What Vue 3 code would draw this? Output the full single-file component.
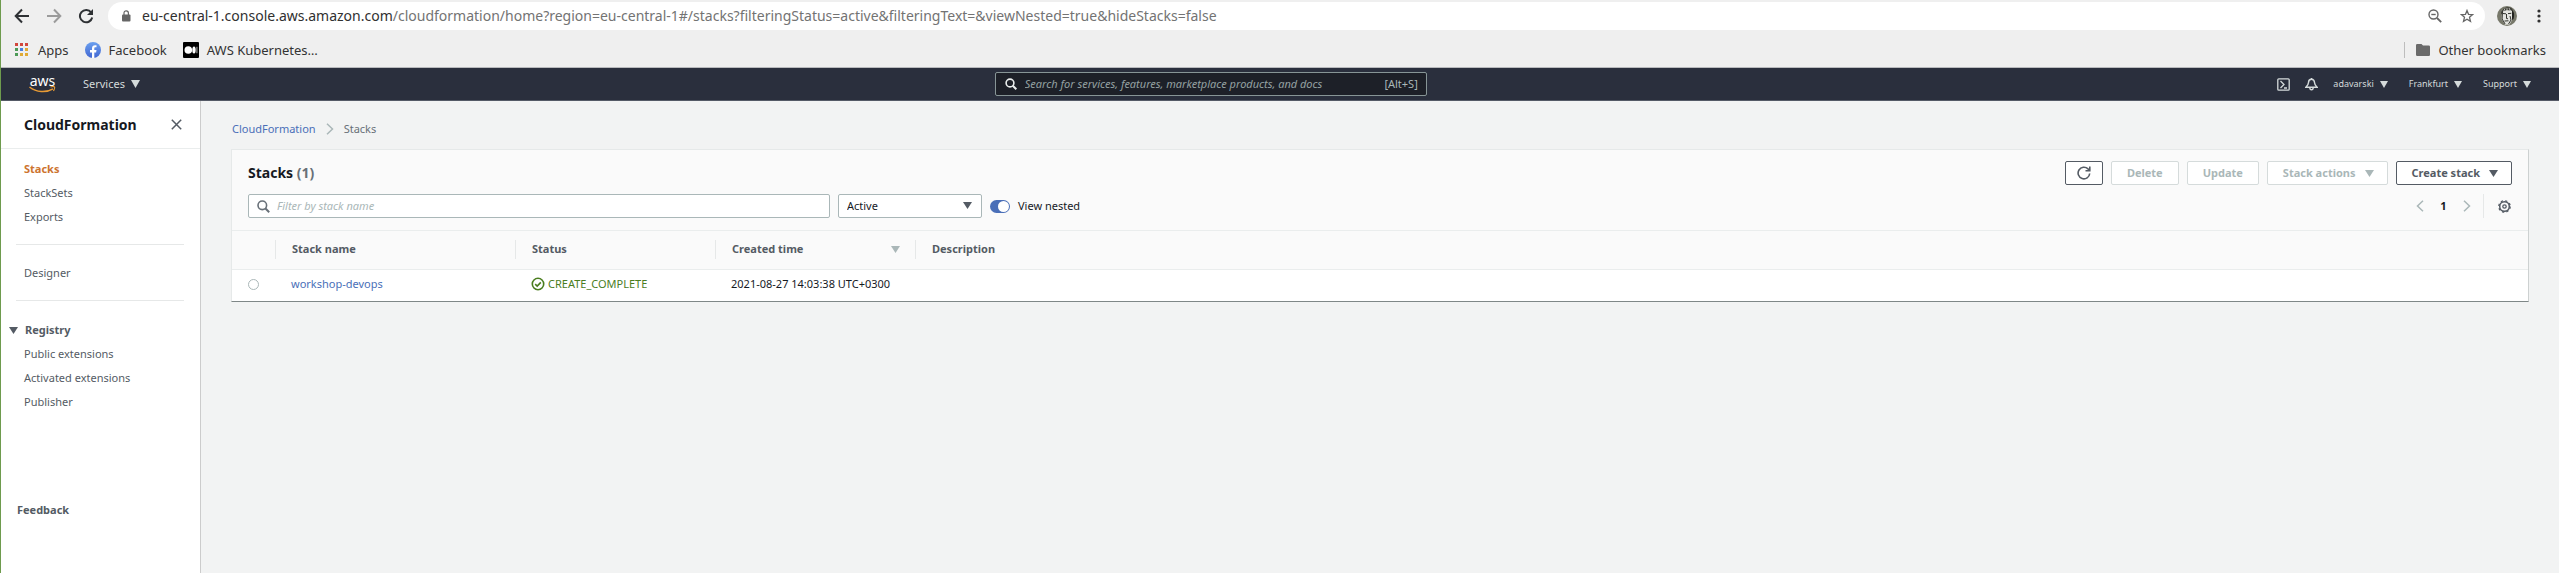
<script setup>
import { ref } from 'vue'

const filterText = ref('')
const status = ref('Active')
const viewNested = ref(true)

const appSquares = ['r', 'r', 'r', 'g', 'b', 'y', 'g', 'y', 'y']
const accountMenus = ['adavarski', 'Frankfurt', 'Support']
const mainLinks = ['Stacks', 'StackSets', 'Exports']
const registryLinks = ['Public extensions', 'Activated extensions', 'Publisher']
const stacks = [
  { name: 'workshop-devops', status: 'CREATE_COMPLETE', created: '2021-08-27 14:03:38 UTC+0300', description: '' },
]
</script>

<template>
  <div class="window">
    <header class="browser">
      <div class="toolbar">
        <button class="nav" aria-label="Back">
          <svg width="16" height="16" viewBox="0 0 16 16" fill="none" stroke="#2e3134" stroke-width="2"><path d="M15 8H2M8 1.500 1.700 8 8 14.500" /></svg>
        </button>
        <button class="nav" aria-label="Forward">
          <svg width="16" height="16" viewBox="0 0 16 16" fill="none" stroke="#9b9b9b" stroke-width="2"><path d="M1 8h13M8 1.500 14.300 8 8 14.500" /></svg>
        </button>
        <button class="nav" aria-label="Reload">
          <svg width="16" height="16" viewBox="0 0 16 16"><path d="M13.200 4.500A6.200 6.200 0 1 0 14.200 9.500" fill="none" stroke="#2e3134" stroke-width="2" /><path d="M15 1v6H9z" fill="#2e3134" /></svg>
        </button>
        <div class="omnibox">
          <svg width="10" height="12" viewBox="0 0 10 12"><rect x="1" y="4.500" width="8.500" height="7" rx="1" fill="#666" /><path d="M3 5V3a2.200 2.200 0 0 1 4.400 0v2" fill="none" stroke="#666" stroke-width="1.200" /></svg>
          <div class="url" role="textbox" aria-label="Address"><span class="host">eu-central-1.console.aws.amazon.com</span>/cloudformation/home?region=eu-central-1#/stacks?filteringStatus=active&amp;filteringText=&amp;viewNested=true&amp;hideStacks=false</div>
          <button class="tool" aria-label="Zoom">
            <svg width="14" height="14" viewBox="0 0 14 14" fill="none" stroke="#666" stroke-width="1.400"><circle cx="5.500" cy="5.500" r="4.500" /><path d="m9 9 4.200 4.200" stroke-width="1.800" /><path d="M3.300 5.500h4.400" /></svg>
          </button>
          <button class="tool" aria-label="Bookmark this page">
            <svg width="14" height="14" viewBox="0 0 14 14" fill="none" stroke="#666" stroke-width="1.300"><path d="m7 1.500 1.500 3.800 4.200.3-3.200 2.700 1 4.100L7 10.200l-3.500 2.200 1-4.100L1.300 5.600l4.200-.3z" /></svg>
          </button>
        </div>
        <button class="avatar" aria-label="Profile">
          <svg width="20" height="20" viewBox="0 0 20 20">
            <circle cx="10" cy="10" r="10" fill="#77786a" />
            <path d="M5 4.500C7 1.500 14 1.500 16 5l-.5 8-3 5.500-4.500.3L4.500 13z" fill="#e4e5e0" />
            <path d="M15 4c2.500 2 2.500 5 1.500 9l-1.500 1z" fill="#22231f" />
            <path d="M4 8.500C3.800 4.500 7 1.500 10.500 1.300s5 1.500 6 4C13 4 9 3.500 6.500 5.500z" fill="#3c3d36" />
            <path d="M8 2.500 6 6.500M12 2l1.500 3M10 2v3" stroke="#dcdcd6" stroke-width=".8" />
            <path d="m6 7.500 3 .3M11 7.600l3.300-.3M9.500 8v4.500l1.500.3M7.500 15l4-.2M13 10l1 4-2.500 4M5.500 6l-.4 7 3 5" fill="none" stroke="#34352f" />
          </svg>
        </button>
        <button class="dots" aria-label="Menu">
          <svg width="4" height="14" viewBox="0 0 4 14" fill="#303030"><circle cx="2" cy="2" r="1.600" /><circle cx="2" cy="7" r="1.600" /><circle cx="2" cy="12" r="1.600" /></svg>
        </button>
      </div>
      <nav class="bookmarks" aria-label="Bookmarks">
        <a href="#" class="bm apps"><span class="squares"><i v-for="(c, i) in appSquares" :key="i" :class="c"></i></span>Apps</a>
        <a href="#" class="bm">
          <svg width="16" height="16" viewBox="0 0 16 16"><defs><linearGradient id="fb" x2="0" y2="1"><stop stop-color="#6ba0ef" /><stop offset="1" stop-color="#4267d2" /></linearGradient></defs><circle cx="8" cy="8" r="8" fill="url(#fb)" /><path d="M7 16v-5.600H5V8h2V6.300C7 4.200 8.200 3.200 10 3.200l1.500.1v2h-1c-.9 0-1.200.5-1.200 1.200V8h2.200l-.4 2.400H9.300V16z" fill="#fff" /></svg>Facebook</a>
        <a href="#" class="bm">
          <svg width="16" height="16" viewBox="0 0 16 16"><rect width="16" height="16" rx="1" fill="#000" /><circle cx="5.300" cy="8" r="3.800" fill="#fff" /><ellipse cx="11" cy="8" rx="1.700" ry="3.600" fill="#fff" /><rect x="13.300" y="4.800" width="1.200" height="6.400" fill="#999" /></svg>AWS Kubernetes…</a>
        <a href="#" class="bm other">
          <svg width="14" height="12" viewBox="0 0 14 12"><path d="M1.200 0H5.500L7 1.500h5.800A1.200 1.200 0 0 1 14 2.700v8.100a1.200 1.200 0 0 1-1.200 1.200H1.200A1.200 1.200 0 0 1 0 10.800V1.200A1.200 1.200 0 0 1 1.200 0z" fill="#6a6a6a" /></svg>Other bookmarks</a>
      </nav>
    </header>

    <header class="aws">
      <div class="aws-left">
        <a href="#" class="logo" aria-label="AWS home">
          <span>aws</span>
          <svg width="27" height="7" viewBox="0 0 27 7" fill="none" stroke="#e79a35" stroke-width="1.500"><path d="M.5 1c7 5.500 16.500 6 23.500 1.800" /><path d="M21.500 1c2-.6 3.500-.6 4 0s0 2-1 4" stroke-width="1.200" /></svg>
        </a>
        <button class="menu services">Services<svg width="9" height="8" viewBox="0 0 9 8"><path d="M0 0h9L4.500 8z" fill="currentColor" /></svg></button>
      </div>
      <label class="search">
        <svg width="12" height="12" viewBox="0 0 12 12" fill="none" stroke="#eaeded" stroke-width="1.600"><circle cx="5" cy="5" r="3.900" /><path d="m7.800 7.800 3.500 3.500" stroke-width="2" /></svg>
        <input type="text" aria-label="Search" placeholder="Search for services, features, marketplace products, and docs" />
        <span>[Alt+S]</span>
      </label>
      <div class="aws-right">
        <button class="icon" aria-label="CloudShell"><svg width="13" height="13" viewBox="0 0 13 13" fill="none" stroke="#d5dbdb" stroke-width="1.300"><rect x=".8" y=".8" width="11.400" height="11.400" rx="1" /><path d="m3.500 3 3.500 3.500L3.500 10M7 10h3" /></svg></button>
        <button class="icon" aria-label="Notifications"><svg width="13" height="13" viewBox="0 0 13 13" fill="none" stroke="#d5dbdb" stroke-width="1.400"><path d="M6.500 1.300c-2 0-3 1.300-3 3.200 0 2-.9 3-2.600 4.700h11.200C10.400 7.500 9.500 6.500 9.500 4.500c0-1.900-1-3.200-3-3.200z" /><path d="M4.800 9.500c0 3 3.400 3 3.400 0M6.500 0v1.500" /></svg></button>
        <button v-for="m in accountMenus" :key="m" class="menu account">{{ m }}<svg width="8" height="7" viewBox="0 0 8 7"><path d="M0 0h8L4 7z" fill="currentColor" /></svg></button>
      </div>
    </header>

    <div class="body">
      <aside class="side">
        <div class="side-head">
          <h1>CloudFormation</h1>
          <button aria-label="Close"><svg width="11" height="11" viewBox="0 0 11 11" stroke="#545b64" stroke-width="1.500"><path d="m.8.8 9.400 9.400M10.200.8.8 10.200" /></svg></button>
        </div>
        <nav class="side-nav">
          <ul>
            <li v-for="l in mainLinks" :key="l"><a href="#" :class="{ active: l === 'Stacks' }">{{ l }}</a></li>
          </ul>
          <hr />
          <ul><li><a href="#">Designer</a></li></ul>
          <hr />
          <button class="section"><svg width="9" height="7" viewBox="0 0 9 7"><path d="M0 0h9L4.500 7z" fill="currentColor" /></svg>Registry</button>
          <ul>
            <li v-for="l in registryLinks" :key="l"><a href="#">{{ l }}</a></li>
          </ul>
        </nav>
        <a href="#" class="feedback">Feedback</a>
      </aside>

      <main class="main">
        <nav class="crumbs" aria-label="Breadcrumb">
          <a href="#">CloudFormation</a>
          <svg width="8" height="12" viewBox="0 0 8 12" fill="none" stroke="#aab7b8" stroke-width="1.500"><path d="m1 .7 5.500 5.300L1 11.300" /></svg>
          <span>Stacks</span>
        </nav>

        <section class="panel">
          <div class="panel-head">
            <div class="row">
              <h2>Stacks <span>(1)</span></h2>
              <div class="actions">
                <button class="btn refresh" aria-label="Refresh"><svg width="14" height="14" viewBox="0 0 14 14" fill="none" stroke="currentColor" stroke-width="1.600"><path d="M12.700 7.500A5.800 5.800 0 1 1 11 2.900l1.700 1.600" /><path d="M12.800.5v4.200H8.500" /></svg></button>
                <button class="btn" disabled>Delete</button>
                <button class="btn" disabled>Update</button>
                <button class="btn drop" disabled>Stack actions<svg width="9" height="7" viewBox="0 0 9 7"><path d="M0 0h9L4.500 7z" fill="currentColor" /></svg></button>
                <button class="btn drop">Create stack<svg width="9" height="7" viewBox="0 0 9 7"><path d="M0 0h9L4.500 7z" fill="currentColor" /></svg></button>
              </div>
            </div>
            <div class="row filters">
              <label class="filter">
                <svg width="13" height="13" viewBox="0 0 13 13" fill="none" stroke="#687078" stroke-width="1.600"><circle cx="5.300" cy="5.300" r="4.300" /><path d="m8.500 8.500 3.700 3.700" stroke-width="2" /></svg>
                <input v-model="filterText" type="text" aria-label="Filter by stack name" placeholder="Filter by stack name" />
              </label>
              <div class="select">
                <select v-model="status" aria-label="Status filter">
                  <option>Active</option>
                  <option>Deleted</option>
                </select>
                <svg width="9" height="7" viewBox="0 0 9 7"><path d="M0 0h9L4.500 7z" fill="#545b64" /></svg>
              </div>
              <label class="toggle"><input v-model="viewNested" type="checkbox" />View nested</label>
              <div class="pager">
                <button aria-label="Previous page"><svg width="8" height="12" viewBox="0 0 8 12" fill="none" stroke="#aab7b8" stroke-width="1.500"><path d="M7 .7 1.500 6 7 11.300" /></svg></button>
                <button class="page" aria-current="page">1</button>
                <button aria-label="Next page"><svg width="8" height="12" viewBox="0 0 8 12" fill="none" stroke="#aab7b8" stroke-width="1.500"><path d="m1 .7 5.500 5.300L1 11.300" /></svg></button>
                <span class="bar"></span>
                <button aria-label="Preferences"><svg width="13" height="13" viewBox="0 0 13 13" fill="none" stroke="#545b64"><circle cx="6.500" cy="6.500" r="4.800" stroke-width="1.500" /><circle cx="6.500" cy="6.500" r="5.700" stroke-width="1.300" stroke-dasharray="2.240 2.240" /><circle cx="6.500" cy="6.500" r="1.700" stroke-width="1.300" /></svg></button>
              </div>
            </div>
          </div>

          <table>
            <colgroup><col class="c-pick" /><col class="c-name" /><col class="c-status" /><col class="c-time" /><col /></colgroup>
            <thead>
              <tr>
                <th aria-label="Selection"></th>
                <th><div>Stack name</div></th>
                <th><div>Status</div></th>
                <th><div>Created time<svg width="9" height="7" viewBox="0 0 9 7"><path d="M0 0h9L4.500 7z" fill="#aab7b8" /></svg></div></th>
                <th><div>Description</div></th>
              </tr>
            </thead>
            <tbody>
              <tr v-for="s in stacks" :key="s.name">
                <td class="pick"><input type="radio" name="stack" :aria-label="s.name" /></td>
                <td><a href="#">{{ s.name }}</a></td>
                <td>
                  <span class="ok"><svg width="14" height="14" viewBox="0 0 14 14" fill="none" stroke="currentColor" stroke-width="1.600"><circle cx="7" cy="7" r="5.700" /><path d="m4.200 7.200 2 1.900 3.600-3.700" /></svg>{{ s.status }}</span>
                </td>
                <td>{{ s.created }}</td>
                <td>{{ s.description }}</td>
              </tr>
            </tbody>
          </table>
        </section>
      </main>
    </div>
  </div>
</template>

<style>
body {
  background: #f2f3f3;
}
</style>

<style scoped>
* {
  box-sizing: border-box;
}
.window {
  display: flex;
  flex-direction: column;
  min-height: 100vh;
  border-left: 1px solid #6e9b4e;
  font: 11px/16px "Noto Sans", "Open Sans", sans-serif;
  color: #16191f;
}
button {
  display: flex;
  align-items: center;
  justify-content: center;
  padding: 0;
  border: 0;
  background: none;
  font: inherit;
  color: inherit;
}
a {
  color: #4a6fb8;
  text-decoration: none;
}
svg {
  display: block;
  flex: none;
}
h1,
h2,
ul {
  margin: 0;
  padding: 0;
  list-style: none;
}
h1,
h2 {
  font-size: 14px;
  line-height: 20px;
}

/* Browser chrome */
.browser {
  background: #efefef;
  border-bottom: 1px solid #b9babd;
  font-size: 13px;
  color: #333;
}
.toolbar {
  display: flex;
  align-items: center;
  height: 32px;
  padding: 2px 18px 2px 13px;
}
.nav {
  width: 16px;
  margin-right: 16px;
}
.nav:nth-child(3) {
  margin-right: 14px;
}
.omnibox {
  flex: 1;
  display: flex;
  align-items: center;
  height: 28px;
  padding: 0 11px 0 13px;
  border-radius: 14px;
  background: #fff;
}
.url {
  flex: 1;
  margin-left: 11px;
  font-size: 14px;
  line-height: 20px;
  color: #737373;
  white-space: nowrap;
}
.host {
  color: #303030;
}
.tool {
  margin-left: 18px;
}
.avatar {
  margin-left: 12px;
}
.dots {
  margin-left: 20px;
}
.bookmarks {
  display: flex;
  align-items: center;
  height: 35px;
  padding: 0 13px 0 14px;
  gap: 16px;
}
.bm {
  display: flex;
  align-items: center;
  gap: 8px;
  color: #333;
  line-height: 16px;
}
.apps {
  gap: 10px;
}
.squares {
  display: grid;
  grid-template-columns: repeat(3, 3px);
  gap: 2px;
}
.squares i {
  height: 3px;
}
.r {
  background: #d2473c;
}
.g {
  background: #4c9a56;
}
.b {
  background: #4a80e0;
}
.y {
  background: #e0aa35;
}
.other {
  margin-left: auto;
  padding-left: 11px;
  border-left: 1px solid #bdbdbd;
}

/* Console header */
.aws {
  display: flex;
  align-items: center;
  height: 33px;
  background: #2a2f3d;
  border-bottom: 1px solid #555a66;
  color: #d5dbdb;
}
.aws-left,
.aws-right {
  flex: 9;
  display: flex;
  align-items: center;
}
.logo {
  display: flex;
  flex-direction: column;
  align-items: center;
  width: 27px;
  margin-left: 28px;
  color: #fff;
  font-size: 14px;
  line-height: 11px;
}
.menu {
  gap: 6px;
}
.services {
  margin-left: 27px;
}
.search {
  display: flex;
  align-items: center;
  flex: 0 1 432px;
  height: 24px;
  padding: 0 8px 0 9px;
  border: 1px solid #879596;
  border-radius: 2px;
  background: #1d2028;
  color: #aab7b8;
}
input,
select {
  margin: 0;
  font: inherit;
  color: inherit;
}
.search input,
.filter input {
  flex: 1;
  min-width: 0;
  padding: 0;
  border: 0;
  outline: 0;
  background: none;
}
.search input {
  margin-left: 8px;
}
.search input::placeholder {
  color: #95a0a2;
  font-style: italic;
}
.aws-right {
  flex: 10;
  justify-content: flex-end;
  padding-right: 28px;
}
.icon {
  margin-right: 15px;
}
.account {
  margin-left: 21px;
  font-size: 9px;
}
.icon + .account {
  margin-left: 0;
}

/* Side navigation */
.body {
  flex: 1;
  display: flex;
  background: #f2f3f3;
}
.side {
  flex: none;
  width: 200px;
  background: #fff;
  border-right: 1px solid #ccc;
  color: #545b64;
}
.side a {
  color: inherit;
}
.side-head {
  display: flex;
  align-items: center;
  justify-content: space-between;
  height: 48px;
  padding: 0 18px 0 23px;
  border-bottom: 1px solid #eaeded;
}
.side-head h1 {
  color: #16191f;
}
.side-nav {
  padding: 8px 16px 0 15px;
}
.side-nav li {
  height: 24px;
  padding: 4px 8px;
}
.side-nav .active {
  color: #cd7430;
  font-weight: 700;
}
hr {
  margin: 15px 0 16px;
  border: 0;
  border-top: 1px solid #e6e8e8;
}
.side-nav .section {
  gap: 7px;
  height: 24px;
  margin: 17px 0 0 -7px;
  font-weight: 700;
}
.feedback {
  display: block;
  margin: 88px 0 0 16px;
  font-weight: 700;
}

/* Content */
.main {
  flex: 1;
  min-width: 0;
  padding: 20px 30px 0;
}
.crumbs {
  display: flex;
  align-items: center;
  gap: 10px;
  height: 16px;
  margin-bottom: 12px;
  padding-left: 1px;
  color: #687078;
}
.panel {
  background: #fff;
  border: 1px solid #e6e9e9;
  border-right-color: #cdd1d1;
  border-bottom: 1px solid #7f8787;
}
.panel-head {
  padding: 11px 16px 12px;
  background: #fafafa;
  border-bottom: 1px solid #eaeded;
}
.row {
  display: flex;
  align-items: center;
}
h2 span {
  color: #687078;
  font-weight: 700;
}
.actions {
  display: flex;
  gap: 8px;
  margin-left: auto;
}
.btn {
  height: 24px;
  padding: 0 15px;
  border: 1px solid #545b64;
  border-radius: 2px;
  background: #fff;
  color: #545b64;
  font-weight: 700;
}
.btn:disabled {
  border-color: #d5dbdb;
  color: #aab7b8;
}
.refresh {
  padding: 0 11px;
}
.drop {
  gap: 9px;
  padding-right: 13px;
}
.filters {
  margin-top: 9px;
}
.filter {
  display: flex;
  align-items: center;
  flex: 0 1 582px;
  height: 24px;
  padding: 0 8px;
  border: 1px solid #aab7b8;
  border-radius: 2px;
  background: #fff;
}
.filter input {
  margin-left: 7px;
}
.filter input::placeholder {
  color: #aab7b8;
  font-style: italic;
}
.select {
  position: relative;
  width: 144px;
  margin: 0 8px;
}
.select select {
  display: block;
  width: 100%;
  height: 24px;
  padding: 0 8px;
  border: 1px solid #aab7b8;
  border-radius: 2px;
  background: #fff;
  appearance: none;
}
.select svg {
  position: absolute;
  top: 8px;
  right: 10px;
  pointer-events: none;
}
.toggle {
  display: flex;
  align-items: center;
  gap: 8px;
}
.toggle input {
  display: flex;
  width: 20px;
  height: 13px;
  padding: 1px;
  border-radius: 7px;
  background: #8a9596;
  appearance: none;
}
.toggle input::before {
  content: "";
  width: 11px;
  height: 11px;
  border-radius: 50%;
  background: #fff;
}
.toggle input:checked {
  justify-content: flex-end;
  background: #4a6fb8;
}
.pager {
  display: flex;
  align-items: center;
  height: 24px;
  margin-left: auto;
  padding-right: 1px;
}
.page {
  width: 39px;
  font-weight: 700;
}
.bar {
  width: 1px;
  height: 24px;
  margin: 0 14px 0 12px;
  background: #e6e8e8;
}

/* Table */
table {
  width: 100%;
  border-collapse: collapse;
  table-layout: fixed;
}
.c-pick {
  width: 43px;
}
.c-name {
  width: 240px;
}
.c-status,
.c-time {
  width: 200px;
}
th {
  height: 38px;
  padding: 0 0 1px;
  background: #fafafa;
  border-bottom: 1px solid #eaeded;
  color: #545b64;
  text-align: left;
}
th div {
  display: flex;
  align-items: center;
  justify-content: space-between;
  height: 19px;
  padding: 0 15px 0 16px;
  border-left: 1px solid #e6e8e8;
}
td {
  height: 32px;
  padding: 0 16px 2px;
}
.pick input {
  display: block;
  width: 11px;
  height: 11px;
  border: 1px solid #aab7b8;
  border-radius: 50%;
  background: #fff;
  appearance: none;
}
.ok {
  display: flex;
  align-items: center;
  gap: 3px;
  color: #4a7d1e;
}
</style>
